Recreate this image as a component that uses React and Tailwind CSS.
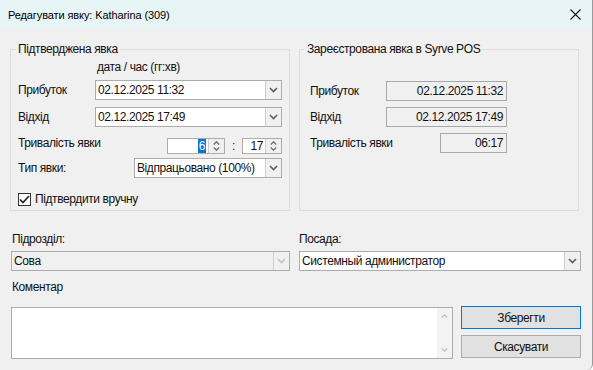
import React from "react";

const Chevron = ({ color = "#5f5f5f", up = false }) => (
  <svg width="9" height="6" viewBox="0 0 9 6" className="block">
    <path
      d={up ? "M1 5 L4.5 1.5 L8 5" : "M1 1 L4.5 4.5 L8 1"}
      fill="none"
      stroke={color}
      strokeWidth="1.6"
    />
  </svg>
);

const SmallChev = ({ up = false, color = "#6a6a6a" }) => (
  <svg width="7" height="4" viewBox="0 0 7 4" className="block">
    <path
      d={up ? "M0.8 3.5 L3.5 0.8 L6.2 3.5" : "M0.8 0.5 L3.5 3.2 L6.2 0.5"}
      fill="none"
      stroke={color}
      strokeWidth="1.2"
    />
  </svg>
);

function Combo({ value, className = "", disabled = false }) {
  return (
    <div
      className={
        "flex h-[20px] border border-[#acacac] " +
        (disabled ? "bg-[#f0f0f0] " : "bg-white ") +
        className
      }
    >
      <div className="flex-1 flex items-center pl-[2px] whitespace-nowrap overflow-hidden">
        {value}
      </div>
      <div className="w-[16px] border-l border-[#cfcfcf] bg-[#f0f0f0] flex items-center justify-center">
        <Chevron color={disabled ? "#c4c4c4" : "#5f5f5f"} />
      </div>
    </div>
  );
}

function Spinner({ value, selected, className = "" }) {
  return (
    <div className={"flex h-[16px] border border-[#acacac] bg-white " + className}>
      <div className="flex-1 flex items-center justify-end pr-[2px]">
        {selected ? (
          <span className="bg-[#0078d7] text-white leading-[14px] px-[1px]">{value}</span>
        ) : (
          <span>{value}</span>
        )}
      </div>
      <div className="w-[16px] border-l border-[#cfcfcf] bg-[#f0f0f0] flex flex-col items-center justify-center gap-[2px]">
        <SmallChev up />
        <SmallChev />
      </div>
    </div>
  );
}

function StaticBox({ value, className = "" }) {
  return (
    <div
      className={
        "h-[20px] border border-[#a8a8a8] flex items-center justify-end pr-[3px] " +
        className
      }
    >
      {value}
    </div>
  );
}

export default function App() {
  return (
    <div className="w-[593px] h-[370px] bg-[#f0f0f0] font-['Liberation_Sans',Arial,sans-serif] text-[12px] leading-[16px] tracking-[-0.4px] text-[#111] overflow-hidden flex flex-col border-r border-[#9a9a9a] rounded-br-[6px]">
      {/* Title bar */}
      <div className="h-[29px] bg-[#e7f5f7] flex items-center justify-between pl-[8px] pr-[11px]">
        <span className="text-[11px] tracking-[-0.1px] text-black">Редагувати явку: Katharina (309)</span>
        <svg width="11" height="11" viewBox="0 0 11 11">
          <path d="M0.5 0.5 L10.5 10.5 M10.5 0.5 L0.5 10.5" stroke="#111" strokeWidth="1.1" />
        </svg>
      </div>

      {/* Body */}
      <div className="pl-[10px] pt-[12px] flex flex-col">
        <div className="flex gap-[9px]">
          {/* Left groupbox */}
          <fieldset className="w-[280px] h-[170px] border border-[#dcdcdc]">
            <legend className="ml-[5px] px-[2px] leading-[16px]">Підтверджена явка</legend>
            <div className="flex flex-col pt-[2px] px-[7px]">
              <div className="h-[16px] pl-[79px]">дата / час (гг:хв)</div>
              <div className="flex items-center justify-between mt-[5px]">
                <span>Прибуток</span>
                <Combo value="02.12.2025 11:32" className="w-[187px]" />
              </div>
              <div className="flex items-center justify-between mt-[7px]">
                <span>Відхід</span>
                <Combo value="02.12.2025 17:49" className="w-[187px]" />
              </div>
              <div className="flex items-start h-[16px] mt-[11px]">
                <span className="flex-1 leading-[12px] -mt-[1px]">Тривалість явки</span>
                <Spinner value="6" selected className="w-[58px]" />
                <span className="w-[17px] text-center">:</span>
                <Spinner value="17" className="w-[40px]" />
              </div>
              <div className="flex items-center justify-between mt-[4px]">
                <span>Тип явки:</span>
                <Combo value="Відпрацьовано (100%)" className="w-[148px]" />
              </div>
              <div className="flex items-center mt-[13px] gap-[4px]">
                <div className="w-[13px] h-[13px] border border-[#333] bg-white flex items-center justify-center">
                  <svg width="11" height="9" viewBox="0 0 11 9">
                    <path d="M1 4.5 L4 7.5 L10 1" fill="none" stroke="#222" strokeWidth="1.7" />
                  </svg>
                </div>
                <span>Підтвердити вручну</span>
              </div>
            </div>
          </fieldset>

          {/* Right groupbox */}
          <fieldset className="w-[280px] h-[170px] border border-[#dcdcdc]">
            <legend className="ml-[5px] px-[2px] leading-[16px]">Зареєстрована явка в Syrve POS</legend>
            <div className="flex flex-col pt-[24px] pl-[10px] pr-[71px]">
              <div className="flex items-center justify-between">
                <span>Прибуток</span>
                <StaticBox value="02.12.2025 11:32" className="w-[121px]" />
              </div>
              <div className="flex items-center justify-between mt-[6px]">
                <span>Відхід</span>
                <StaticBox value="02.12.2025 17:49" className="w-[121px]" />
              </div>
              <div className="flex items-center justify-between mt-[6px]">
                <span>Тривалість явки</span>
                <StaticBox value="06:17" className="w-[67px]" />
              </div>
            </div>
          </fieldset>
        </div>

        {/* Bottom combos */}
        <div className="flex gap-[9px] ml-[1px] mt-[20px]">
          <div className="w-[279px] flex flex-col gap-[4px]">
            <span className="pl-[1px]">Підрозділ:</span>
            <Combo value="Сова" disabled className="w-[279px]" />
          </div>
          <div className="w-[282px] flex flex-col gap-[4px]">
            <span>Посада:</span>
            <Combo value="Системный администратор" className="w-[282px]" />
          </div>
        </div>

        <div className="ml-[2px] mt-[8px]">Коментар</div>

        <div className="flex gap-[8px] ml-[1px] mt-[12px]">
          <div className="w-[442px] h-[52px] border border-[#acacac] bg-white flex">
            <div className="flex-1" />
            <div className="w-[15px] bg-[#f3f3f3] flex flex-col items-center justify-between py-[6px]">
              <SmallChev up color="#c2c2c2" />
              <SmallChev color="#c2c2c2" />
            </div>
          </div>
          <div className="w-[120px] flex flex-col gap-[6px] -mt-[1px]">
            <button className="h-[23px] border border-[#0078d7] bg-[#e1e1e1] text-[#111]">Зберегти</button>
            <button className="h-[23px] border border-[#adadad] bg-[#e1e1e1] text-[#111]">Скасувати</button>
          </div>
        </div>
      </div>
    </div>
  );
}
